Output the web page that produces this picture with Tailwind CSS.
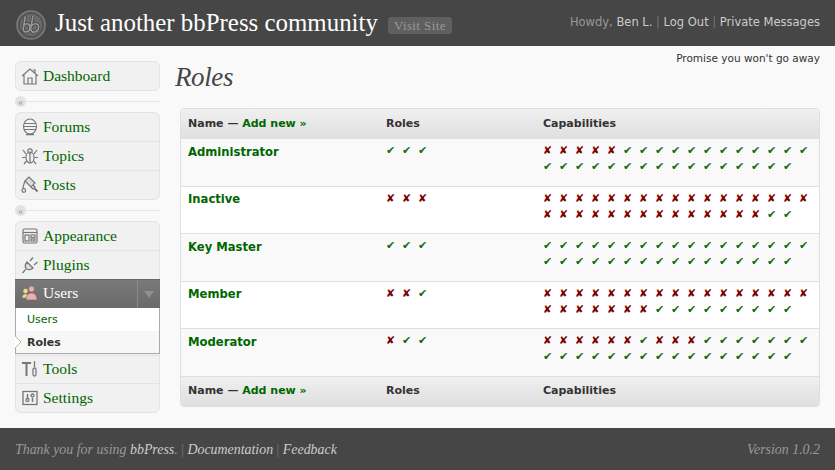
<!DOCTYPE html>
<html lang="en">
<head>
    <meta charset="UTF-8">
    <title>Roles</title>
    <script src="https://cdn.jsdelivr.net/npm/@tailwindcss/browser@4"></script>
</head>
<body class="bg-[#f9f9f9] h-[470px] w-[835px] overflow-hidden flex flex-col font-['DejaVu_Sans',sans-serif] text-[11px] text-[#333]">
    <!-- Header -->
    <header class="h-[46px] shrink-0 bg-[#464646] flex items-center pl-[16px] pr-[15px]">
        <svg class="w-[30px] h-[30px] mr-[9px] mt-[3px] shrink-0" viewBox="0 0 32 32">
            <circle cx="16" cy="16" r="15" fill="#5a5a5a" stroke="#7c7c7c" stroke-width="1.6"/>
            <circle cx="16" cy="16" r="12.500" fill="#6a6a6a" stroke="#4c4c4c" stroke-width="1"/>
            <path d="M10 6.500 L7.500 21 M7.500 20 C7.800 25 14.500 24.500 15 18.500 C15.300 14.500 11 13.500 8.500 16.500 M18 6.500 L15.500 21 M15.800 21 C16.500 25 23.500 24.500 24.200 18.500 C24.600 14.500 20 13.500 17 16.500" fill="none" stroke="#404040" stroke-width="3.200"/>
            <path d="M10 6.500 L7.500 21 M7.500 20 C7.800 25 14.500 24.500 15 18.500 C15.300 14.500 11 13.500 8.500 16.500 M18 6.500 L15.500 21 M15.800 21 C16.500 25 23.500 24.500 24.200 18.500 C24.600 14.500 20 13.500 17 16.500" fill="none" stroke="#9a9a9a" stroke-width="1.700"/>
        </svg>
        <span class="font-['Liberation_Serif',serif] text-[24.9px] text-white leading-none mt-[1px] whitespace-nowrap">Just another bbPress community</span>
        <span class="ml-[10px] mt-[5px] bg-[#5f5f5f] rounded-[3px] px-[6px] h-[17px] flex items-center font-['Liberation_Serif',serif] text-[13px] tracking-[0.4px] text-[#999] whitespace-nowrap">Visit Site</span>
        <div class="ml-auto text-[11.5px] text-[#999] whitespace-nowrap">Howdy, <span class="text-[#ccc]">Ben L.</span> <span class="text-[#777]">|</span> <span class="text-[#ccc]">Log Out</span> <span class="text-[#777]">|</span> <span class="text-[#ccc]">Private Messages</span></div>
    </header>

    <div class="flex-1 flex min-h-0">
        <!-- Sidebar -->
        <aside class="w-[145px] ml-[15px] mt-[15px] shrink-0 font-['Liberation_Serif',serif] text-[15.5px] text-[#006600]">
            <div class="border border-[#e3e3e3] rounded-[6px] bg-[#f1f1f1]">
                <a class="h-[28px] flex items-center gap-[4px] pl-[5px]">
                    <svg class="w-[18px] h-[18px] shrink-0" viewBox="0 0 18 18" fill="none" stroke="#777" stroke-width="1.2"><path d="M1 9 9 2l8 7"/><path d="M3 8v9h12V8"/><path d="M7 17v-6h4v6"/><path d="M12 3h2v3"/></svg>
                    <span>Dashboard</span>
                </a>
            </div>
            <div class="relative h-[21px] flex items-center">
                <div class="w-full h-[1px] bg-[#e6e6e6]"></div>
                <div class="absolute left-0 w-[11px] h-[11px] rounded-full bg-[#e3e3e3] flex items-center justify-center text-[10px] text-[#999] leading-none">«</div>
            </div>
            <div class="border border-[#e3e3e3] rounded-[6px] bg-[#f1f1f1]">
                <a class="h-[29px] flex items-center gap-[4px] pl-[5px] border-b border-[#e3e3e3]">
                    <svg class="w-[18px] h-[18px] shrink-0" viewBox="0 0 18 18" fill="none" stroke="#777" stroke-width="1.1"><ellipse cx="9" cy="8.500" rx="6.500" ry="7.500"/><path d="M3 5.500h12M2.500 8.500h13M3 11.500h12"/><path d="M5 16.500h8" stroke-width="1.500"/></svg>
                    <span>Forums</span>
                </a>
                <a class="h-[29px] flex items-center gap-[4px] pl-[5px] border-b border-[#e3e3e3]">
                    <svg class="w-[18px] h-[18px] shrink-0" viewBox="0 0 18 18" fill="none" stroke="#777" stroke-width="1.2"><ellipse cx="9" cy="10.500" rx="4" ry="5.500"/><circle cx="9" cy="4" r="2.200"/><path d="M5 7 2 3M13 7l3-4M4.500 10.500H1M13.500 10.500H17M5.500 14 3 17M12.500 14l2.500 3M9 6v10"/></svg>
                    <span>Topics</span>
                </a>
                <a class="h-[28px] flex items-center gap-[4px] pl-[5px]">
                    <svg class="w-[18px] h-[18px] shrink-0" viewBox="0 0 18 18" fill="none" stroke="#777" stroke-width="1.2"><path d="M4 5 8 1l6 6-4 4z" fill="#ddd"/><path d="m10 11 2 2 2-2-2-2"/><path d="m13 12 3.500 3.500" stroke-width="2"/><path d="M4 5c-1 3-2 5-2 7"/><circle cx="2.800" cy="14.500" r="1.800"/></svg>
                    <span>Posts</span>
                </a>
            </div>
            <div class="relative h-[21px] flex items-center">
                <div class="w-full h-[1px] bg-[#e6e6e6]"></div>
                <div class="absolute left-0 w-[11px] h-[11px] rounded-full bg-[#e3e3e3] flex items-center justify-center text-[10px] text-[#999] leading-none">«</div>
            </div>
            <div class="border border-[#e3e3e3] rounded-[6px] bg-[#f1f1f1]">
                <a class="h-[29px] flex items-center gap-[4px] pl-[5px] border-b border-[#e3e3e3]">
                    <svg class="w-[18px] h-[18px] shrink-0" viewBox="0 0 18 18" fill="none" stroke="#777" stroke-width="1.2"><rect x="2" y="2" width="14" height="14" rx="1.500"/><path d="M2 5.500h14"/><rect x="4" y="8" width="4" height="6"/><rect x="10" y="8" width="4" height="2.500"/><rect x="10" y="12" width="4" height="2"/></svg>
                    <span>Appearance</span>
                </a>
                <a class="h-[28px] flex items-center gap-[4px] pl-[5px]">
                    <svg class="w-[18px] h-[18px] shrink-0" viewBox="0 0 18 18" fill="none" stroke="#777" stroke-width="1.300"><path d="m6 6 6 6c-2 2-5 2-6.500 1S3.500 9 6 6z" fill="#ddd"/><path d="m9 5 3-3.500M13 9l3.500-3M4.500 13.500 1.500 17"/></svg>
                    <span>Plugins</span>
                </a>
                <!-- Open section -->
                <a class="h-[29px] -mx-[1px] pb-[2px] flex items-center gap-[4px] pl-[6px] bg-gradient-to-b from-[#7a7a7a] to-[#6a6a6a] border-t border-[#666] text-white relative">
                    <svg class="w-[18px] h-[18px] shrink-0" viewBox="0 0 18 18"><circle cx="4.500" cy="7" r="2.500" fill="#e6e08a" stroke="#777" stroke-width=".6"/><path d="M1 14c0-3 1.500-4 3.500-4S8 11 8 14z" fill="#e6e08a" stroke="#777" stroke-width=".6"/><circle cx="10.500" cy="5" r="3" fill="#e8b0b0" stroke="#8a5a5a" stroke-width=".6"/><path d="M5 16c0-5 2.500-7 5.500-7s5.500 2 5.500 7z" fill="#e8b0b0" stroke="#8a5a5a" stroke-width=".6"/></svg>
                    <span>Users</span>
                    <div class="absolute right-0 top-0 h-full w-[23px] border-l border-[#8a8a8a] flex items-center justify-center">
                        <div class="w-0 h-0 border-x-[5px] border-x-transparent border-t-[7px] border-t-[#8f8f8f]"></div>
                    </div>
                </a>
                <div class="-mx-[1px] border-x border-b border-[#aaa] bg-white font-['DejaVu_Sans',sans-serif] text-[11px] relative">
                    <div class="h-[23px] pt-[2px] flex items-center pl-[11px] text-[#006600]">Users</div>
                    <div class="h-[22px] pt-[2px] flex items-center pl-[11px] bg-[#f7f7f7] font-bold text-[#333]">Roles</div>
                    <svg class="absolute -left-[1px] top-[28px] w-[7px] h-[12px]" viewBox="0 0 7 12"><path d="M0 0 6 6 0 12" fill="#fff" stroke="#bbb"/></svg>
                </div>
                <a class="h-[29px] mt-[1px] pb-[2px] flex items-center gap-[4px] pl-[5px] border-b border-t border-[#e3e3e3]">
                    <svg class="w-[18px] h-[18px] shrink-0" viewBox="0 0 18 18" fill="none" stroke="#777" stroke-width="1.300"><path d="M1 3h9M5.500 3v13" stroke-width="2"/><path d="M13.500 1v6"/><rect x="12" y="8" width="3" height="8" rx="1.500"/></svg>
                    <span>Tools</span>
                </a>
                <a class="h-[28px] flex items-center gap-[4px] pl-[5px]">
                    <svg class="w-[18px] h-[18px] shrink-0" viewBox="0 0 18 18" fill="none" stroke="#777" stroke-width="1.300"><rect x="2" y="2.500" width="14" height="13"/><path d="M6.500 5v4M11.500 9v4" stroke-width="1.500"/><circle cx="6.500" cy="11" r="1.500"/><circle cx="11.500" cy="6.500" r="1.500"/></svg>
                    <span>Settings</span>
                </a>
            </div>
        </aside>

        <!-- Main -->
        <main class="flex-1 min-w-0 pl-[15px] pr-[15px]">
            <div class="text-right text-[10.5px] text-[#333] h-[13px] mt-[6px] leading-[13px]">Promise you won't go away</div>
            <h1 class="font-['Liberation_Serif',serif] italic text-[27px] tracking-[-0.4px] leading-none text-[#464646] -mt-[1px] h-[44px]">Roles</h1>
            <div class="ml-[5px] border border-[#dfdfdf] rounded-[4px] overflow-hidden">
                <table class="w-full table-fixed border-collapse">
                    <thead>
                        <tr class="h-[30px] bg-gradient-to-b from-[#f0f0f0] to-[#dfdfdf] font-bold text-left">
                            <th class="w-[198px] pl-[7px]">Name — <span class="text-[#006600]">Add new »</span></th>
                            <th class="w-[157px] pl-[7px]">Roles</th>
                            <th class="pl-[7px]">Capabilities</th>
                        </tr>
                    </thead>
                    <tbody id="rows"></tbody>
                    <tfoot>
                        <tr class="h-[30px] bg-gradient-to-b from-[#f0f0f0] to-[#dfdfdf] font-bold text-left">
                            <th class="pl-[7px]">Name — <span class="text-[#006600]">Add new »</span></th>
                            <th class="pl-[7px]">Roles</th>
                            <th class="pl-[7px]">Capabilities</th>
                        </tr>
                    </tfoot>
                </table>
            </div>
        </main>
    </div>

    <!-- Footer -->
    <footer class="h-[42px] shrink-0 bg-[#464646] flex items-center pt-[3px] px-[15px] font-['Liberation_Serif',serif] italic text-[13.9px] text-[#999]">
        <span>Thank you for using <span class="text-[#ccc]">bbPress</span>. <span class="text-[#777] not-italic">|</span> <span class="text-[#ccc]">Documentation</span> <span class="text-[#777] not-italic">|</span> <span class="text-[#ccc]">Feedback</span></span>
        <span class="ml-auto">Version 1.0.2</span>
    </footer>

    <script>
        // y = allowed, x = denied
        const roles = [
            ['Administrator', 'yyy', 'xxxxxyyyyyyyyyyyy', 'yyyyyyyyyyyyyyyy'],
            ['Inactive', 'xxx', 'xxxxxxxxxxxxxxxxx', 'xxxxxxxxxxxxxxyy'],
            ['Key Master', 'yyy', 'yyyyyyyyyyyyyyyyy', 'yyyyyyyyyyyyyyyy'],
            ['Member', 'xxy', 'xxxxxxxxxxxxxxxxx', 'xxxxxxxyyyyyyyyy'],
            ['Moderator', 'xyy', 'xxxxxxyxxxyyyyyyy', 'yyyyyyyyyyyyyyyy'],
        ];

        function marks(str) {
            return [...str].map(c => c === 'y'
                ? '<span class="inline-block w-[16px] text-[#0f700f]">✔</span>'
                : '<span class="inline-block w-[16px] text-[#7a0000]">✘</span>').join('');
        }

        const rowHeights = ['h-[47px]', 'h-[47px]', 'h-[48px]', 'h-[47px]', 'h-[48px]'];

        document.getElementById('rows').innerHTML = roles.map((r, i) => `
            <tr class="${rowHeights[i]} ${i % 2 ? 'bg-white' : 'bg-[#f9f9f9]'} border-b border-[#dfdfdf] align-top">
                <td class="pl-[7px] ${i % 2 ? 'pt-[4px]' : 'pt-[5px]'} font-bold text-[11.6px] text-[#006600]">${r[0]}</td>
                <td class="pl-[7px] pt-[4px] text-[11px] leading-[16px]">${marks(r[1])}</td>
                <td class="pl-[7px] pt-[4px] text-[11px] leading-[16px] whitespace-nowrap">${marks(r[2])}<br>${marks(r[3])}</td>
            </tr>`).join('');
    </script>
</body>
</html>
